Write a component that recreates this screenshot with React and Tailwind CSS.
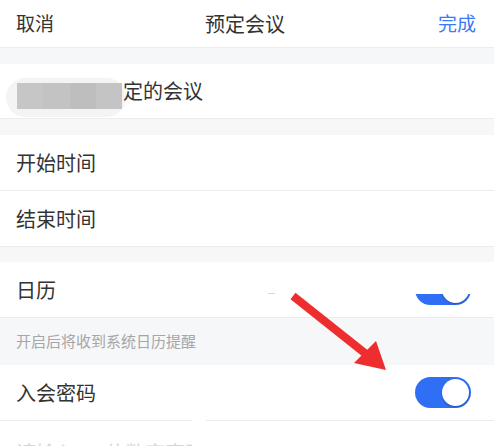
export default function App() {
  const font = { fontFamily: '"Noto Sans CJK SC", "Noto Sans", sans-serif' };
  return (
    <div className="relative w-[498px] h-[446px] overflow-hidden bg-white text-[#333]" style={font}>
      <div className="w-[494px]">
        {/* nav */}
        <div className="h-[48px] flex items-center justify-between px-4 border-b border-[#ececec] relative">
          <span className="text-[19px]">取消</span>
          <span className="absolute left-[205px] text-[20px]">预定会议</span>
          <span className="text-[19px] text-[#3a7af5] mr-[2px]">完成</span>
        </div>
        <div className="h-[16px] bg-[#f6f7f9]" />
        {/* name */}
        <div className="h-[55px] flex items-center border-b border-[#ececec] relative">
          <div className="absolute left-[6px] top-[14px] w-[120px] h-[39px] rounded-full bg-[#f4f4f4]" />
          <div className="absolute left-[17px] top-[19px] h-[26px] w-[105px] flex blur-[0.6px]">
            <div className="flex-1 bg-[#c6c6c6]" />
            <div className="flex-1 bg-[#c3c3c3]" />
            <div className="flex-1 bg-[#bebebe]" />
            <div className="flex-1 bg-[#c4c4c4]" />
          </div>
          <span className="relative ml-[123px] text-[20px]">定的会议</span>
        </div>
        <div className="h-[16px] bg-[#f6f7f9]" />
        <div className="h-[56px] flex items-center px-4 border-b border-[#ececec] text-[20px]">开始时间</div>
        <div className="h-[56px] flex items-center px-4 border-b border-[#ececec] text-[20px]">结束时间</div>
        <div className="h-[15px] bg-[#f6f7f9]" />
        {/* calendar */}
        <div className="h-[56px] flex items-center justify-between px-4 border-b border-[#ececec] relative">
          <span className="text-[20px]">日历</span>
          <div className="w-[56px] h-[31px] rounded-full bg-[#2f6ff5] relative mr-[7px]">
            <div className="absolute right-[2px] top-[2px] w-[27px] h-[27px] rounded-full bg-white shadow-[0_1px_2px_rgba(0,0,0,0.3)]" />
          </div>
          <div className="absolute left-[268px] top-0 w-[220px] h-[32px] bg-white" />
          <div className="absolute left-[268px] top-[31px] w-[7px] h-[1px] bg-[#d8d8d8]" />
        </div>
        <div className="h-[47px] flex items-center px-4 bg-[#f6f7f9] text-[15px] text-[#a6a6a8]">开启后将收到系统日历提醒</div>
        {/* password */}
        <div className="h-[56px] flex items-center justify-between px-4 border-b border-[#ececec]">
          <span className="text-[20px]">入会密码</span>
          <div className="w-[56px] h-[31px] rounded-full bg-[#2f6ff5] relative mr-[7px]">
            <div className="absolute right-[2px] top-[2px] w-[27px] h-[27px] rounded-full bg-white shadow-[0_1px_2px_rgba(0,0,0,0.3)]" />
          </div>
        </div>
        <div className="h-[56px] flex items-start pt-[17px] px-4 text-[20px] text-[#d4d4d6] relative">
          请输入4-6位数字密码
          <div className="absolute left-[192px] -top-[4px] w-[14px] h-[40px] bg-white" />
        </div>
      </div>
      <svg className="absolute left-0 top-0" width="498" height="446" viewBox="0 0 498 446">
        <line x1="293" y1="296" x2="366" y2="354" stroke="#ee2e2e" strokeWidth="8" />
        <polygon points="354,363 376,341 386,370" fill="#ee2e2e" />
      </svg>
    </div>
  );
}
